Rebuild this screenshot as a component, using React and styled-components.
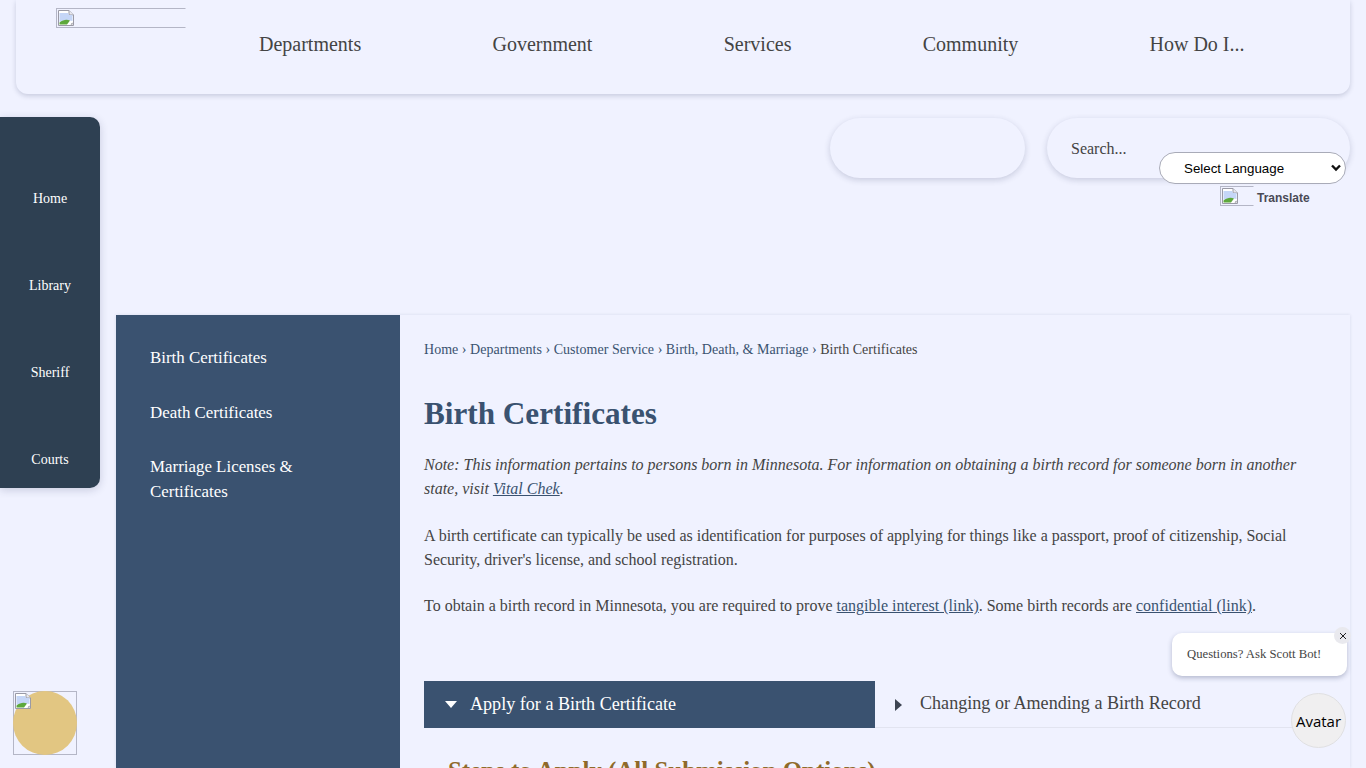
import React from 'react';
import styled, { createGlobalStyle } from 'styled-components';

const Global = createGlobalStyle`
  html, body { margin: 0; padding: 0; height: 768px; overflow: hidden; background: #f0f2ff; }
  body { font-family: "Liberation Serif", "Times New Roman", serif; color: #444; }
  * { box-sizing: border-box; }
`;

const Page = styled.div`
  width: 1366px;
  height: 768px;
  overflow: hidden;
  position: relative;
`;
const Header = styled.header`
  margin: 0 16px;
  height: 94px;
  border-radius: 0 0 12px 12px;
  background: #f0f2ff;
  box-shadow: 0 2px 5px rgba(40, 50, 90, 0.2);
  display: flex;
  align-items: flex-start;
  padding: 8px 0 0 40px;
`;
const BrokenBox = styled.div`
  flex: none;
  width: ${p => p.$w}px;
  height: ${p => p.$h}px;
  border: 1px solid #b4b6c6;
  border-right-color: ${p => (p.$open ? 'transparent' : '#b4b6c6')};
  padding: 1px;
  line-height: 0;
`;
const TopNav = styled.nav`
  display: flex;
  padding: 24px 0 0 73px;
  gap: 131.25px;
`;
const TopLink = styled.a`
  font-size: 20px;
  line-height: 25px;
  color: #444;
  white-space: nowrap;
`;
const Body = styled.div`
  display: grid;
  grid-template-columns: 100px 1fr;
  column-gap: 16px;
  padding-right: 16px;
`;
const Rail = styled.aside`
  margin-top: 23px;
  height: 371px;
  background: #2e4052;
  border-radius: 0 10px 10px 0;
  box-shadow: 0 2px 8px rgba(40, 50, 90, 0.2);
  display: flex;
  flex-direction: column;
  gap: 69px;
  padding-top: 73px;
`;
const RailLink = styled.a`
  height: 18px;
  line-height: 18px;
  text-align: center;
  color: #fff;
  font-size: 14px;
`;
const Right = styled.div`
  min-width: 0;
`;
const SearchRow = styled.div`
  height: 221px;
  display: flex;
  justify-content: flex-end;
  gap: 22px;
  padding-top: 24px;
`;
const Pill = styled.div`
  width: ${p => p.$w}px;
  height: 60px;
  border-radius: 30px;
  background: #f0f2ff;
  box-shadow: 0 2px 6px rgba(40, 50, 90, 0.2);
  display: flex;
  align-items: center;
  padding: 1px 24px 0;
  font-size: 16px;
  color: #444;
`;
const Translate = styled.div`
  position: absolute;
  left: 1159px;
  top: 152px;
  width: 187px;
  display: flex;
  flex-direction: column;
  align-items: flex-start;
`;
const LangSelect = styled.div`
  width: 187px;
  height: 32px;
  border-radius: 16px;
  background: #fff;
  border: 1px solid #a9abb8;
  display: flex;
  align-items: center;
  justify-content: space-between;
  padding: 0 3px 0 24px;
  font: 13.33px "Liberation Sans", Arial, sans-serif;
  color: #000;
`;
const Powered = styled.div`
  display: flex;
  align-items: center;
  margin: 2px 0 0 61px;
  gap: 3px;
  font: bold 12px "Liberation Sans", Arial, sans-serif;
  color: #4a4a55;
`;
const PoweredLabel = styled.span`
  padding-top: 3px;
`;
const Main = styled.main`
  display: flex;
  height: 453px;
  overflow: hidden;
  box-shadow: 0 0 3px rgba(40, 50, 90, 0.12);
`;
const Side = styled.nav`
  width: 284px;
  flex: none;
  background: #3a5270;
  padding: 31px 34px 0;
  display: flex;
  flex-direction: column;
`;
const SideLink = styled.a`
  color: #fff;
  font-size: 16.9px;
  line-height: 24.65px;
  margin-bottom: 30px;
  max-width: 170px;
`;
const Content = styled.article`
  flex: 1;
  min-width: 0;
  padding: 26px 24px 0;
  position: relative;
`;
const Crumbs = styled.div`
  font-size: 14px;
  line-height: 18px;
  letter-spacing: 0.03px;
  color: #3a5270;
  span { color: #444; }
`;
const Title = styled.h1`
  margin: 36px 0 0;
  font-size: 31.2px;
  line-height: 38px;
  font-weight: bold;
  color: #3a5270;
`;
const Para = styled.p`
  margin: ${p => p.$top}px 0 0;
  font-size: 16px;
  line-height: 24px;
  color: #444;
  font-style: ${p => (p.$italic ? 'italic' : 'normal')};
  a { color: #3a5270; text-decoration: underline; }
`;
const Tabs = styled.div`
  display: flex;
  margin-top: 63px;
  height: 47px;
  width: 100%;
  border-bottom: 1px solid #e2e4f0;
`;
const Tab = styled.div`
  height: 47px;
  flex: ${p => (p.$active ? '0 0 451px' : '1')};
  background: ${p => (p.$active ? '#3a5270' : 'transparent')};
  color: ${p => (p.$active ? '#fff' : '#444')};
  font-size: 18.1px;
  display: flex;
  align-items: center;
  padding-left: ${p => (p.$active ? '21px' : '20px')};
  gap: ${p => (p.$active ? '13px' : '18px')};
`;
const TabLabel = styled.span`
  margin-top: ${p => (p.$active ? '-1px' : '-3px')};
`;
const Steps = styled.h2`
  margin: 28px 0 0 24px;
  font-size: 24.95px;
  line-height: 30px;
  font-weight: bold;
  color: #8f6a2a;
  white-space: nowrap;
`;
const Badge = styled.div`
  position: absolute;
  left: 13px;
  top: 691px;
  width: 64px;
  height: 64px;
  border: 1px solid #b4b6c6;
  line-height: 0;
`;
const BadgeDisc = styled.div`
  position: absolute;
  inset: -1px;
  border-radius: 50%;
  background: #e2c682;
`;
const BadgeIcon = styled.div`
  position: absolute;
  left: 1px;
  top: 1px;
`;
const Bubble = styled.div`
  position: absolute;
  left: 1172px;
  top: 633px;
  width: 175px;
  height: 43px;
  background: #fff;
  border-radius: 10px;
  box-shadow: 0 2px 5px rgba(40, 50, 90, 0.3);
  display: flex;
  align-items: center;
  padding-left: 15px;
  font-size: 12.7px;
  color: #444;
`;
const Close = styled.div`
  position: absolute;
  right: -4px;
  top: -6px;
  width: 17px;
  height: 17px;
  border-radius: 50%;
  background: #e9e9ee;
  display: flex;
  align-items: center;
  justify-content: center;
  color: #222;
`;
const Avatar = styled.div`
  position: absolute;
  left: 1291px;
  top: 693px;
  width: 55px;
  height: 55px;
  border-radius: 50%;
  background: #f0eff0;
  border: 1px solid #e0e0e2;
  display: flex;
  align-items: center;
  justify-content: center;
  font: 15px "Open Sans", "Noto Sans", sans-serif;
  color: #000;
`;

const BrokenIcon = () => (
  <svg width="16" height="16" viewBox="0 0 16 16">
    <path d="M.5.5h10.500l4.500 4.500v10.500H.5z" fill="#fff" stroke="#9a9aa6" />
    <path d="M11 .5v4.500h4.500" fill="#e8e8ee" stroke="#9a9aa6" />
    <path d="M1.500 3h8.500l1 2h3.500v6L8 10l-6.500 2z" fill="#c5d6f7" />
    <path d="M1.500 14.500v-2C5 9.500 9 9 12 10.500l-3 4z" fill="#5da83c" />
    <path d="M12.500 14.500l2-2v2z" fill="#7a7a84" />
  </svg>
);
const Chevron = () => (
  <svg width="12" height="10" viewBox="0 0 12 10">
    <path d="M2 2.500l4 4 4-4" fill="none" stroke="#111" strokeWidth="2.400" />
  </svg>
);
const TriDown = () => (
  <svg width="12" height="7" viewBox="0 0 12 7"><path d="M0 0h12L6 7z" fill="#fff" /></svg>
);
const TriRight = () => (
  <svg width="7" height="12" viewBox="0 0 7 12"><path d="M0 0l7 6-7 6z" fill="#3d4452" /></svg>
);
const XIcon = () => (
  <svg width="8" height="8" viewBox="0 0 8 8"><path d="M1 1l6 6M7 1L1 7" stroke="#222" strokeWidth="1" /></svg>
);

export default function App() {
  return (
    <Page>
      <Global />
      <Header>
        <BrokenBox $w={130} $h={20} $open><BrokenIcon /></BrokenBox>
        <TopNav>
          {['Departments', 'Government', 'Services', 'Community', 'How Do I...'].map(t => (
            <TopLink key={t}>{t}</TopLink>
          ))}
        </TopNav>
      </Header>
      <Body>
        <Rail>
          {['Home', 'Library', 'Sheriff', 'Courts'].map(t => <RailLink key={t}>{t}</RailLink>)}
        </Rail>
        <Right>
          <SearchRow>
            <Pill $w={195} />
            <Pill $w={303}>Search...</Pill>
          </SearchRow>
          <Main>
            <Side>
              <SideLink>Birth Certificates</SideLink>
              <SideLink>Death Certificates</SideLink>
              <SideLink>Marriage Licenses &amp; Certificates</SideLink>
            </Side>
            <Content>
              <Crumbs>Home › Departments › Customer Service › Birth, Death, &amp; Marriage › <span>Birth Certificates</span></Crumbs>
              <Title>Birth Certificates</Title>
              <Para $top={20} $italic>
                Note: This information pertains to persons born in Minnesota. For information on obtaining a birth record for someone born in another state, visit <a>Vital Chek</a>.
              </Para>
              <Para $top={23}>
                A birth certificate can typically be used as identification for purposes of applying for things like a passport, proof of citizenship, Social Security, driver's license, and school registration.
              </Para>
              <Para $top={22}>
                To obtain a birth record in Minnesota, you are required to prove <a>tangible interest (link)</a>. Some birth records are <a>confidential (link)</a>.
              </Para>
              <Tabs>
                <Tab $active><TriDown /><TabLabel $active>Apply for a Birth Certificate</TabLabel></Tab>
                <Tab><TriRight /><TabLabel>Changing or Amending a Birth Record</TabLabel></Tab>
              </Tabs>
              <Steps>Steps to Apply (All Submission Options)</Steps>
            </Content>
          </Main>
        </Right>
      </Body>
      <Translate>
        <LangSelect>Select Language<Chevron /></LangSelect>
        <Powered>
          <BrokenBox $w={34} $h={20} $open><BrokenIcon /></BrokenBox>
          <PoweredLabel>Translate</PoweredLabel>
        </Powered>
      </Translate>
      <Badge>
        <BadgeDisc />
        <BadgeIcon><BrokenIcon /></BadgeIcon>
      </Badge>
      <Bubble>
        Questions? Ask Scott Bot!
        <Close><XIcon /></Close>
      </Bubble>
      <Avatar>Avatar</Avatar>
    </Page>
  );
}
